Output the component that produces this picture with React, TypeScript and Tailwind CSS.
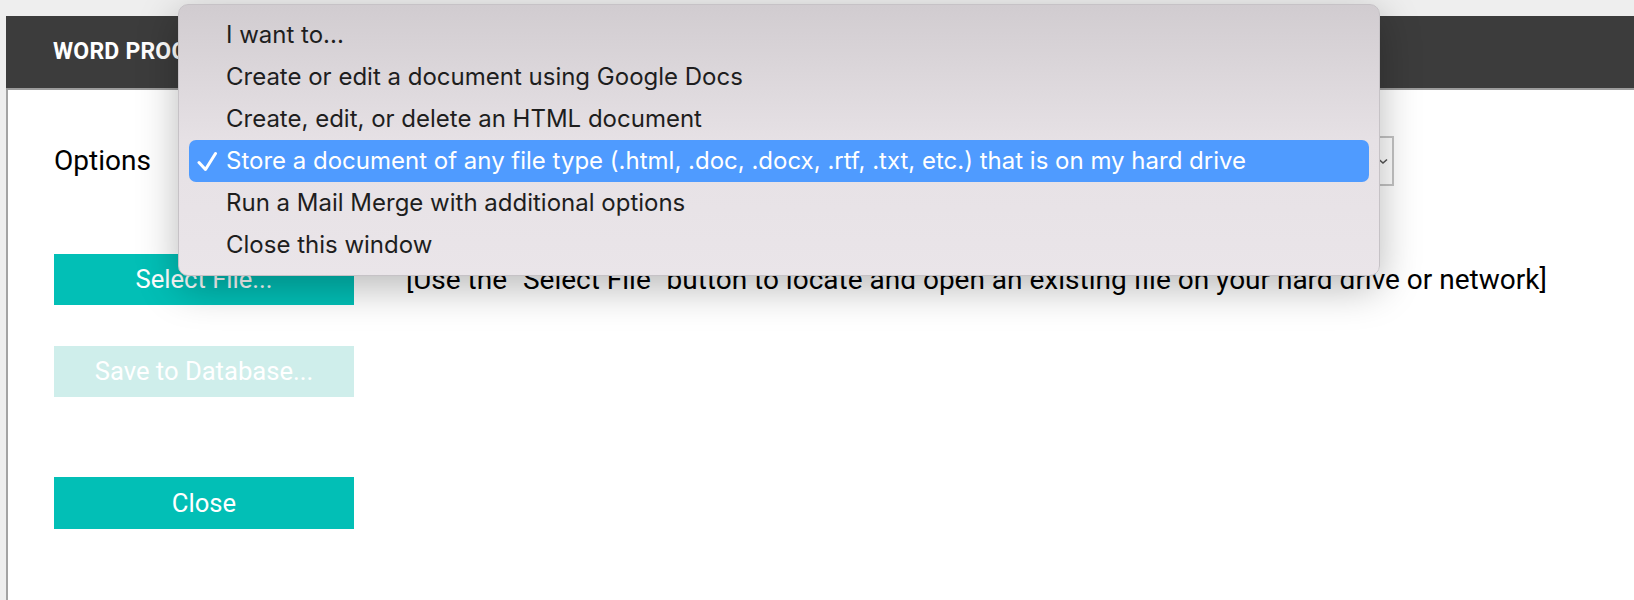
import React from "react";

const items = [
  "I want to...",
  "Create or edit a document using Google Docs",
  "Create, edit, or delete an HTML document",
  "Store a document of any file type (.html, .doc, .docx, .rtf, .txt, etc.) that is on my hard drive",
  "Run a Mail Merge with additional options",
  "Close this window",
];

export default function App() {
  return (
    <div
      className="relative w-full h-[600px] overflow-hidden bg-[#eeeeee] pt-[16px] pl-[6px]"
      style={{ fontFamily: "Roboto, 'Liberation Sans', sans-serif" }}
    >
      <div className="flex flex-col h-full bg-white">
        <div className="h-[74px] shrink-0 bg-[#3c3c3c] border-b-2 border-[#9c9c9c] flex items-center pl-[47px]">
          <span className="text-white font-bold text-[23px] tracking-[0.2px]">WORD PROCESSING</span>
        </div>
        <div className="flex-1 border-l-2 border-[#a3a3a3] pt-[46px] pl-[46px]">
          <div className="flex items-center h-[50px]">
            <div className="w-[134px] text-[28px] text-black">Options</div>
            <div className="relative w-[1206px] h-[50px] border-2 border-[#c4c4c4] bg-white">
              <svg
                className="absolute right-[3px] top-[17px]"
                width="12"
                height="12"
                viewBox="0 0 12 12"
              >
                <path d="M2 4.5 L6 8 L10 4.5" fill="none" stroke="#555" strokeWidth="1.6" />
              </svg>
            </div>
          </div>
          <div className="flex items-center mt-[68px]">
            <button className="w-[300px] h-[51px] bg-[#02bfb6] text-white text-[25.6px]">
              Select File...
            </button>
            <div className="ml-[52px] text-[28px] text-black whitespace-nowrap">
              [Use the "Select File" button to locate and open an existing file on your hard drive or network]
            </div>
          </div>
          <button className="mt-[41px] w-[300px] h-[51px] bg-[#cfeeeb] text-white text-[25.6px] block">
            Save to Database...
          </button>
          <button className="mt-[80px] w-[300px] h-[52px] bg-[#02bfb6] text-white text-[25.6px] block">
            Close
          </button>
        </div>
      </div>

      <div
        className="absolute left-[178px] top-[4px] w-[1202px] h-[272px] rounded-[10px] border border-[#c6c2c6] bg-gradient-to-b from-[#d1ccd0] via-[#e6e1e5] to-[#eae5e9] shadow-[0_12px_40px_rgba(0,0,0,0.28)] pt-[9px] pb-[10px] px-[10px]"
        style={{ fontFamily: "Inter, 'Noto Sans', sans-serif" }}
      >
        {items.map((t, i) => {
          const sel = i === 3;
          return (
            <div
              key={i}
              className={
                sel
                  ? "relative h-[42px] flex items-center rounded-[7px] bg-[#4f9bff] text-white pl-[37px] text-[24px] whitespace-nowrap"
                  : "relative h-[42px] flex items-center text-[#1e1e1e] pl-[37px] text-[24px] whitespace-nowrap"
              }
            >
              {sel && (
                <svg
                  className="absolute left-[8px] top-[11px]"
                  width="22"
                  height="22"
                  viewBox="0 0 22 22"
                >
                  <path
                    d="M2 11.5 L8.5 18.5 L18.5 2.5"
                    fill="none"
                    stroke="white"
                    strokeWidth="3"
                    strokeLinecap="round"
                    strokeLinejoin="round"
                  />
                </svg>
              )}
              {t}
            </div>
          );
        })}
      </div>
    </div>
  );
}
